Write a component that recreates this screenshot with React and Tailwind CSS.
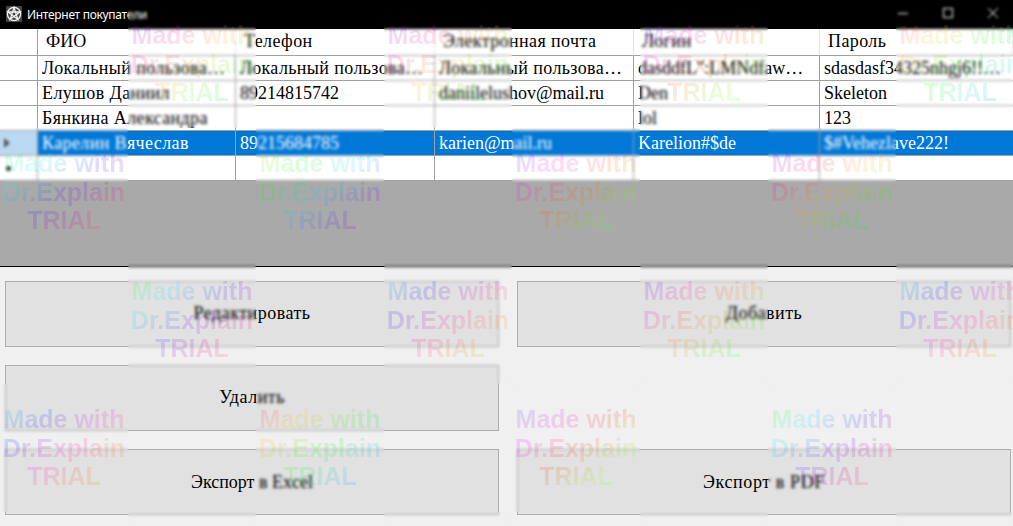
const rows = [
  { name: 'Локальный пользова…', phone: 'Локальный пользова…', email: 'Локальный пользова…', login: 'dasddfL":LMNdfaw…', pass: 'sdasdasf34325nhgj6!!…' },
  { name: 'Елушов Даниил', phone: '89214815742', email: 'daniilelushov@mail.ru', login: 'Den', pass: 'Skeleton' },
  { name: 'Бянкина Александра', phone: '', email: '', login: 'lol', pass: '123' },
  { name: 'Карелин Вячеслав', phone: '89215684785', email: 'karien@mail.ru', login: 'Karelion#$de', pass: '$#Vehezlave222!', selected: true },
  { name: '', phone: '', email: '', login: '', pass: '', isNew: true },
];

const headers = ['ФИО', 'Телефон', 'Электронная почта', 'Логин', 'Пароль'];
const buttons = [
  { label: 'Редактировать', extra: 'pb-[2px] tracking-[0.5px]' },
  { label: 'Добавить', extra: 'pb-[2px] tracking-[0.5px]' },
  { label: 'Удалить', extra: 'pb-[2px] tracking-[0.5px]' },
  null,
  { label: 'Экспорт в Excel', extra: '' },
  { label: 'Экспорт в PDF', extra: 'tracking-[0.6px]' },
];

// start hue of the watermark in each 128px cell, null where there is none
const tileHues = [
  [null, 250, null, 250, null, 230, null, 330],
  [105, null, 40, null, 230, null, 250, null],
  [null, 110, null, 170, null, 240, null, 160],
  [160, null, 330, null, 220, null, 110, null],
  [null, 110, null, 170, null, 240, null, 160],
];

const rainbow = (h) =>
  `linear-gradient(142deg, hsl(${h} 100% 50%), hsl(${h + 75} 100% 50%), hsl(${h + 150} 100% 50%), hsl(${h + 225} 100% 50%), hsl(${h + 300} 100% 50%))`;

const hasCyrillic = (text) => /[а-яё]/i.test(text);

const Watermark = () => (
  <div className="absolute inset-0 grid grid-cols-[repeat(8,128px)] grid-rows-[repeat(5,128px)] overflow-hidden pointer-events-none">
    {tileHues.flat().map((hue, i) =>
      hue === null ? (
        <div key={i}></div>
      ) : (
        <div key={i} className="backdrop-blur-[1.75px] overflow-hidden pt-[21px]">
          <div
            className="text-center font-bold text-[25px] leading-[28.5px] whitespace-nowrap text-transparent bg-clip-text opacity-[0.15] font-['Liberation_Sans',sans-serif]"
            style={{ backgroundImage: rainbow(hue) }}
          >
            <div>Made with</div>
            <div>Dr.Explain</div>
            <div>TRIAL</div>
          </div>
        </div>
      )
    )}
  </div>
);

const TitleBar = () => (
  <div className="h-[29px] bg-black flex items-center text-white">
    <svg viewBox="0 0 16 16" className="w-4 h-4 ml-[6px] mr-[5px] -mt-[1px]" fill="none" stroke="#f2f2f2" strokeWidth="1.3">
      <rect x="0" y="0" width="16" height="16" fill="#444" stroke="none" />
      <circle cx="8" cy="8" r="6.6" />
      <path d="M8 1.6 11.8 13.2 2 6h12L4.2 13.2z" />
    </svg>
    <span className="text-xs tracking-[-0.3px] font-['Noto_Sans',sans-serif]">Интернет покупатели</span>
    <div className="ml-auto flex items-center gap-[35px] pr-[15px] -mt-[3px]">
      <svg viewBox="0 0 10 10" className="w-[10px] h-[10px]" stroke="#fff" fill="none"><path d="M0 5.5h10" /></svg>
      <svg viewBox="0 0 10 10" className="w-[10px] h-[10px]" stroke="#fff" fill="none"><rect x=".5" y=".5" width="9" height="9" /></svg>
      <svg viewBox="0 0 10 10" className="w-[10px] h-[10px]" stroke="#fff" fill="none"><path d="M0 0l10 10M10 0 0 10" /></svg>
    </div>
  </div>
);

const Table = () => (
  <div className="grid grid-cols-[38px_198px_199px_199px_186px_1fr] grid-rows-[27px_repeat(5,25px)] bg-white text-[18px] leading-[24px] text-black">
    <div className="border-r border-b border-[#a0a0a0]"></div>
    {headers.map((h, i) => (
      <div key={h} className={`pl-2 border-r border-b border-r-[#e3e3e3] border-b-[#a0a0a0] last:border-r-0 whitespace-nowrap overflow-hidden ${i > 0 ? 'tracking-[0.4px]' : ''}`}>
        {h}
      </div>
    ))}
    {rows.map((r, i) => {
      const cellClass = `pl-1 border-r border-b border-[#a0a0a0] whitespace-nowrap overflow-hidden ${r.selected ? 'bg-[#0078d7] text-white' : ''}`;
      const cell = (text) => (hasCyrillic(text) ? <span className="tracking-[0.38px]">{text}</span> : text);
      return (
        <div key={i} className="contents">
          <div className={`flex items-center border-r border-b border-[#a0a0a0] ${r.selected ? 'bg-[#b9d9f3]' : ''}`}>
            {r.selected && <div className="ml-[4px] w-0 h-0 border-y-[5px] border-y-transparent border-l-[6px] border-l-[#555]"></div>}
            {r.isNew && <div className="ml-[6px] w-[5px] h-[5px] rounded-full bg-[#333]"></div>}
          </div>
          <div className={cellClass}>{cell(r.name)}</div>
          <div className={cellClass}>{cell(r.phone)}</div>
          <div className={cellClass}>{cell(r.email)}</div>
          <div className={cellClass}>{r.login}</div>
          <div className={`${cellClass} border-r-0`}>{r.pass}</div>
        </div>
      );
    })}
  </div>
);

export default function App() {
  return (
    <div className="relative w-[1013px] h-[526px] overflow-hidden bg-[#f0f0f0] font-['Liberation_Serif',serif]">
      <TitleBar />
      <Table />
      <div className="h-[86px] bg-[#a9a9a9] border-b border-black"></div>
      <div className="grid grid-cols-[494px_494px] grid-rows-[66px_66px_66px] gap-x-[18px] gap-y-[18px] pl-[5px] pt-[14px]">
        {buttons.map((b, i) =>
          b ? (
            <button key={i} className={`bg-[#e1e1e1] border border-[#adadad] text-[18px] text-black ${b.extra}`}>
              {b.label}
            </button>
          ) : (
            <div key={i}></div>
          )
        )}
      </div>
      <Watermark />
    </div>
  );
}
